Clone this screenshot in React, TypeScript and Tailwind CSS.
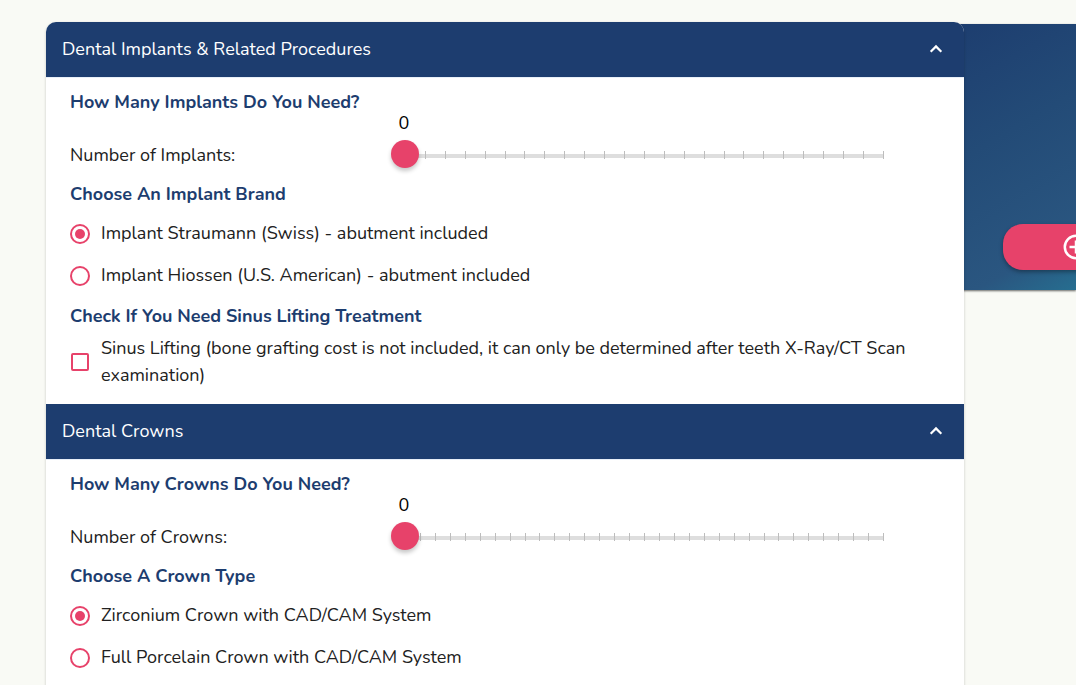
import { useState } from "react";
import type { ReactNode } from "react";

type Choice = { value: string; label: string };

function Section({ title, first, children }: { title: string; first?: boolean; children: ReactNode }) {
  const [open, setOpen] = useState(true);
  return (
    <section>
      <h2>
        <button
          type="button"
          aria-expanded={open}
          onClick={() => setOpen(!open)}
          className={
            "flex h-14 w-full items-center justify-between border-b border-[#e8eff8] bg-[#1d3d6f] bg-clip-padding px-4 pb-0.5 text-left text-lg text-white " +
            (first ? "rounded-t-[10px]" : "")
          }
        >
          <span>{title}</span>
          <svg viewBox="0 0 24 24" className={open ? "size-6" : "size-6 rotate-180"} fill="none" stroke="currentColor" strokeWidth="2.2" aria-hidden="true">
            <path d="M6.7 14.7 12 9.4l5.3 5.3" />
          </svg>
        </button>
      </h2>
      {open && <div className="px-6 pt-1 pb-[15px]">{children}</div>}
    </section>
  );
}

function Heading({ children }: { children: ReactNode }) {
  return <h3 className="mb-1.5 pt-2 text-lg leading-6 font-bold text-[#1d3d6f]">{children}</h3>;
}

function CountSlider({ id, label, max }: { id: string; label: string; max: number }) {
  const [count, setCount] = useState(0);
  return (
    <div className="-mt-1.5 grid grid-cols-[321px_minmax(0,1fr)] items-end pr-[42px] pb-1.5">
      <label htmlFor={id} className="leading-[25px]">
        {label}
      </label>
      <div>
        <div className="mx-[13px] h-[26px]">
          <output
            htmlFor={id}
            className="block w-10 -translate-x-1/2 text-center leading-[18px] text-black"
            style={{ marginLeft: `${(count / max) * 100}%` }}
          >
            {count}
          </output>
        </div>
        <div className="relative h-7">
          <div className="absolute inset-x-3.5 top-3.5 h-1 bg-[#dedede]" />
          <div className="absolute inset-x-3.5 top-[11px] flex h-2 justify-between">
            {Array.from({ length: max + 1 }, (_, i) => (
              <span key={i} className="w-px bg-[#bdbdbd]" />
            ))}
          </div>
          <input
            id={id}
            type="range"
            min={0}
            max={max}
            value={count}
            onChange={(e) => setCount(Number(e.target.value))}
            className="relative block h-7 w-full cursor-pointer appearance-none bg-transparent [&::-webkit-slider-thumb]:size-7 [&::-webkit-slider-thumb]:appearance-none [&::-webkit-slider-thumb]:rounded-full [&::-webkit-slider-thumb]:bg-[#e7426a] [&::-webkit-slider-thumb]:shadow-[0_3px_4px_rgba(0,0,0,0.22)]"
          />
        </div>
      </div>
    </div>
  );
}

function RadioList({ name, choices }: { name: string; choices: Choice[] }) {
  const [picked, setPicked] = useState(choices[0].value);
  return (
    <div role="radiogroup">
      {choices.map((c) => (
        <label key={c.value} className="flex h-[42px] cursor-pointer items-center gap-[11px]">
          <input
            type="radio"
            name={name}
            value={c.value}
            checked={picked === c.value}
            onChange={() => setPicked(c.value)}
            className="mt-0.5 size-5 shrink-0 appearance-none rounded-full border-2 border-[#e7426a] bg-white bg-clip-content p-[3px] checked:bg-[#e7426a]"
          />
          <span>{c.label}</span>
        </label>
      ))}
    </div>
  );
}

function CheckOption({ label }: { label: string }) {
  return (
    <label className="flex cursor-pointer items-center gap-3 pt-px">
      <input
        type="checkbox"
        className="ml-px size-[18px] shrink-0 appearance-none rounded-xs border-2 border-[#e7426a] checked:bg-[#e7426a]"
      />
      <span>{label}</span>
    </label>
  );
}

export default function App() {
  return (
    <div className="flex h-screen items-start overflow-hidden bg-[#f9faf5] pt-[22px] pl-[46px] font-['Nunito','Lato',sans-serif] text-lg leading-[27px] text-[#212121]">
      <main className="relative z-10 min-w-0 flex-1 rounded-t-[10px] bg-white shadow-[0_1px_3px_rgba(0,0,0,0.2)]">
        <Section title="Dental Implants & Related Procedures" first>
          <Heading>How Many Implants Do You Need?</Heading>
          <CountSlider id="implants" label="Number of Implants:" max={24} />
          <Heading>Choose An Implant Brand</Heading>
          <RadioList
            name="implant-brand"
            choices={[
              { value: "straumann", label: "Implant Straumann (Swiss) - abutment included" },
              { value: "hiossen", label: "Implant Hiossen (U.S. American) - abutment included" },
            ]}
          />
          <Heading>Check If You Need Sinus Lifting Treatment</Heading>
          <CheckOption label="Sinus Lifting (bone grafting cost is not included, it can only be determined after teeth X-Ray/CT Scan examination)" />
        </Section>
        <Section title="Dental Crowns">
          <Heading>How Many Crowns Do You Need?</Heading>
          <CountSlider id="crowns" label="Number of Crowns:" max={32} />
          <Heading>Choose A Crown Type</Heading>
          <RadioList
            name="crown-type"
            choices={[
              { value: "zirconium", label: "Zirconium Crown with CAD/CAM System" },
              { value: "porcelain", label: "Full Porcelain Crown with CAD/CAM System" },
            ]}
          />
        </Section>
      </main>
      <aside className="mt-0.5 -ml-4 flex h-[266px] w-32 shrink-0 items-end bg-linear-[150deg,#1d3d6f_0%,#234b77_42%,#2a5680_83%,#266e90_100%] pb-5 pl-[55px] shadow-[0_1px_2px_rgba(0,0,0,0.6)]">
        <button
          type="button"
          aria-label="Add"
          className="flex h-[46px] w-60 shrink-0 items-center rounded-[20px] bg-[#e7426a] pl-[58px] text-white shadow-[0_2px_4px_rgba(0,0,0,0.35)]"
        >
          <svg viewBox="0 0 30 30" className="size-[30px] shrink-0" fill="none" stroke="currentColor" strokeWidth="2.5" aria-hidden="true">
            <circle cx="15" cy="15" r="11.2" />
            <path d="M8.5 15h13M15 8.5v13" />
          </svg>
        </button>
      </aside>
    </div>
  );
}
